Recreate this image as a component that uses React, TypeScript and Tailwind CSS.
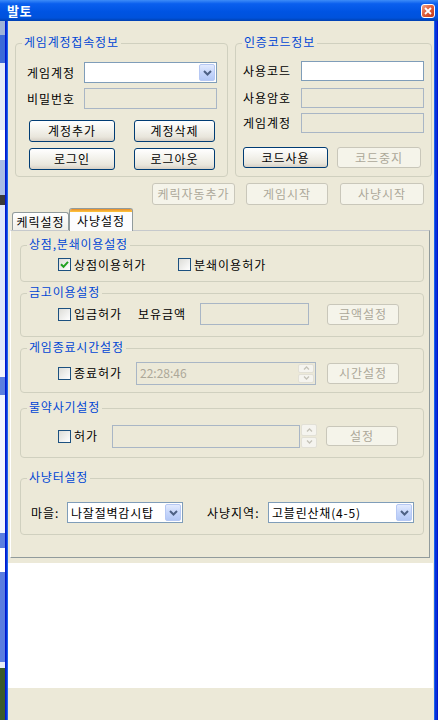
import React from "react";

type P = { children?: React.ReactNode; className?: string; disabled?: boolean };

function Btn({ children, disabled = false, className = "" }: P) {
  return (
    <div
      className={`flex shrink-0 items-center justify-center rounded-[3px] border text-[12px] leading-none tracking-[1px] ${
        disabled
          ? "border-[#c9c7ba] bg-[#f5f4ea] text-[#aca899]"
          : "border-[#003c74] bg-[linear-gradient(to_bottom,#ffffff_0%,#f3f2ec_45%,#e9e6dc_80%,#d6d0c5_100%)] text-black"
      } ${className}`}
    >
      {children}
    </div>
  );
}

function Group({ title, className = "", children }: P & { title: string }) {
  return (
    <div className={`relative shrink-0 rounded-[4px] border border-[#d0d0bf] ${className}`}>
      <div className="absolute left-[6px] top-[-10px] h-[16px] bg-[#ece9d8] px-[2px] text-[12px] leading-[16px] tracking-[0.8px] text-[#0046d5]">
        {title}
      </div>
      {children}
    </div>
  );
}

function Box({ disabled = false, className = "", children }: P) {
  return (
    <div
      className={`flex shrink-0 items-center border text-[12px] leading-none ${
        disabled ? "border-[#a9b6c5] bg-[#ece9d8]" : "border-[#7f9db9] bg-white"
      } ${className}`}
    >
      {children}
    </div>
  );
}

function DropBtn() {
  return (
    <div className="mr-[1px] flex h-[17px] w-[16px] shrink-0 items-center justify-center rounded-[2px] border border-[#b6c8f4] bg-[linear-gradient(to_bottom,#e3ebfe_0%,#c6d6fb_50%,#b3c8f6_100%)]">
      <svg width="9" height="6" viewBox="0 0 9 6">
        <path d="M1 1 L4.5 4.5 L8 1" fill="none" stroke="#4d6185" strokeWidth="2" />
      </svg>
    </div>
  );
}

function Combo({ value = "", className = "" }: { value?: string; className?: string }) {
  return (
    <Box className={`h-[21px] ${className}`}>
      <span className="flex-1 pl-[3px] tracking-[0.8px] text-black">{value}</span>
      <DropBtn />
    </Box>
  );
}

function Check({ checked = false }: { checked?: boolean }) {
  return (
    <div className="flex h-[13px] w-[13px] shrink-0 items-center justify-center border border-[#1c5180] bg-[linear-gradient(135deg,#dcdcd7,#ffffff)]">
      {checked && (
        <svg width="9" height="9" viewBox="0 0 9 9">
          <path d="M1 4.2 L3.5 6.8 L8 1.8" fill="none" stroke="#21a121" strokeWidth="2" />
        </svg>
      )}
    </div>
  );
}

function CheckItem({ label, checked = false, className = "" }: { label: string; checked?: boolean; className?: string }) {
  return (
    <div className={`flex shrink-0 items-center ${className}`}>
      <Check checked={checked} />
      <span className="ml-[3px] text-[12px] leading-none tracking-[1px] text-black">{label}</span>
    </div>
  );
}

function Spin({ className = "" }: { className?: string }) {
  return (
    <div className={`flex shrink-0 flex-col gap-[1px] ${className}`}>
      <div className="flex flex-1 items-center justify-center rounded-[2px] border border-[#e2e0d6] bg-[#f5f4ef]">
        <svg width="7" height="4" viewBox="0 0 7 4">
          <path d="M1 3.5 L3.5 1 L6 3.5" fill="none" stroke="#c4c2b8" strokeWidth="1.3" />
        </svg>
      </div>
      <div className="flex flex-1 items-center justify-center rounded-[2px] border border-[#e2e0d6] bg-[#f5f4ef]">
        <svg width="7" height="4" viewBox="0 0 7 4">
          <path d="M1 0.5 L3.5 3 L6 0.5" fill="none" stroke="#c4c2b8" strokeWidth="1.3" />
        </svg>
      </div>
    </div>
  );
}

function Label({ children, className = "" }: P) {
  return <span className={`shrink-0 text-[12px] leading-none tracking-[1px] text-black ${className}`}>{children}</span>;
}

export default function App() {
  return (
    <div className="flex h-[720px] w-[438px] flex-col overflow-hidden bg-[#ece9d8] font-['Noto_Sans_CJK_KR','Noto_Sans',sans-serif]">
      {/* title bar */}
      <div className="flex h-[21px] shrink-0 items-center justify-between bg-[linear-gradient(to_bottom,#3d8cf8_0%,#0a5fee_18%,#0054e3_55%,#0052dc_85%,#0040b0_100%)] pl-[7px] pr-[3px]">
        <span className="text-[13px] font-bold leading-none tracking-[0.5px] text-white">발토</span>
        <div className="flex h-[14px] w-[14px] items-center justify-center rounded-[3px] border border-white bg-[linear-gradient(135deg,#f0a48a_0%,#e0603c_45%,#c43a1a_100%)]">
          <svg width="8" height="8" viewBox="0 0 8 8">
            <path d="M1 1 L7 7 M7 1 L1 7" stroke="#ffffff" strokeWidth="1.8" />
          </svg>
        </div>
      </div>

      <div className="flex flex-1">
        {/* desktop strip */}
        <div className="flex w-[5px] shrink-0 flex-col">
          <div className="h-[14px] bg-[#9fb3d8]" />
          <div className="h-[28px] bg-[#3c6ad8]" />
          <div className="h-[67px] bg-[#e4ebf8]" />
          <div className="h-[30px] bg-[#ffffff]" />
          <div className="h-[35px] bg-[#a9bde6]" />
          <div className="h-[10px] bg-[#3a3a3a]" />
          <div className="h-[155px] bg-[#dfe7fb]" />
          <div className="h-[17px] bg-[#f4f6fc]" />
          <div className="h-[18px] bg-[#5b7fe0]" />
          <div className="h-[138px] bg-[#f0f4ff]" />
          <div className="h-[15px] bg-[#5b7fe0]" />
          <div className="h-[24px] bg-[#ffffff]" />
          <div className="h-[90px] bg-[#5a7ee0]" />
          <div className="h-[6px] bg-[#e8eef8]" />
          <div className="flex-1 bg-[#3b5a2a]" />
        </div>
        {/* window left border */}
        <div className="w-[1px] shrink-0 bg-[#0019cf]" />
        <div className="w-[1px] shrink-0 bg-[#0831d9]" />
        <div className="w-[1px] shrink-0 bg-[#1d63ea]" />

        {/* client area */}
        <div className="flex w-[426px] shrink-0 flex-col bg-[#ece9d8]">
          {/* top groups */}
          <div className="mt-[22px] flex gap-[7px] pl-[7px]">
            <Group title="게임계정접속정보" className="h-[134px] w-[213px]">
              <div className="mt-[18px] flex items-center pl-[11px]">
                <Label className="w-[57px]">게임계정</Label>
                <Combo className="w-[133px]" />
              </div>
              <div className="mt-[5px] flex items-center pl-[11px]">
                <Label className="w-[57px]">비밀번호</Label>
                <Box disabled className="h-[21px] w-[133px]" />
              </div>
              <div className="mt-[11px] flex gap-[19px] pl-[13px]">
                <Btn className="h-[22px] w-[86px]">계정추가</Btn>
                <Btn className="h-[22px] w-[81px]">계정삭제</Btn>
              </div>
              <div className="mt-[6px] flex gap-[19px] pl-[13px]">
                <Btn className="h-[22px] w-[86px]">로그인</Btn>
                <Btn className="h-[22px] w-[81px]">로그아웃</Btn>
              </div>
            </Group>

            <Group title="인증코드정보" className="h-[134px] w-[197px]">
              <div className="mt-[17px] flex items-center pl-[7px]">
                <Label className="w-[58px]">사용코드</Label>
                <Box className="h-[20px] w-[123px]" />
              </div>
              <div className="mt-[7px] flex items-center pl-[7px]">
                <Label className="w-[58px]">사용암호</Label>
                <Box disabled className="h-[20px] w-[123px]" />
              </div>
              <div className="mt-[5px] flex items-center pl-[7px]">
                <Label className="w-[58px]">게임계정</Label>
                <Box disabled className="h-[20px] w-[123px]" />
              </div>
              <div className="mt-[14px] flex gap-[9px] pl-[7px]">
                <Btn className="h-[21px] w-[85px]">코드사용</Btn>
                <Btn disabled className="h-[21px] w-[84px]">
                  코드중지
                </Btn>
              </div>
            </Group>
          </div>

          {/* action buttons */}
          <div className="mt-[6px] flex h-[22px] pl-[144px]">
            <Btn disabled className="h-[22px] w-[83px]">
              케릭자동추가
            </Btn>
            <Btn disabled className="ml-[11px] h-[22px] w-[82px]">
              게임시작
            </Btn>
            <Btn disabled className="ml-[12px] h-[22px] w-[84px]">
              사냥시작
            </Btn>
          </div>

          {/* tabs */}
          <div className="mt-[3px] flex h-[22px] items-end pl-[4px]">
            <div className="flex h-[18px] w-[57px] items-center justify-center rounded-t-[3px] border border-b-0 border-[#919b9c] bg-[linear-gradient(to_bottom,#ffffff,#f0efe8)] text-[12px] leading-none tracking-[1px] text-black">
              케릭설정
            </div>
            <div className="relative z-10 -mb-[1px] flex h-[23px] w-[64px] flex-col rounded-t-[3px] border border-b-0 border-[#919b9c] bg-[#fcfcfe]">
              <div className="h-[3px] rounded-t-[2px] bg-[linear-gradient(to_bottom,#e68b2c,#ffc73c)]" />
              <div className="flex flex-1 items-center justify-center pb-[2px] text-[12px] leading-none tracking-[1px] text-black">
                사냥설정
              </div>
            </div>
          </div>
          <div className="ml-[2px] flex h-[328px] w-[420px] flex-col border border-[#919b9c] border-l-white border-t-[#c6c9cc] bg-[#ece9d8]">
            <Group title="상점,분쇄이용설정" className="ml-[9px] mt-[14px] h-[37px] w-[404px]">
              <div className="flex pl-[37px] pt-[12px]">
                <CheckItem checked label="상점이용허가" className="w-[120px]" />
                <CheckItem label="분쇄이용허가" />
              </div>
            </Group>

            <Group title="금고이용설정" className="ml-[9px] mt-[11px] h-[44px] w-[404px]">
              <div className="mt-[9px] flex h-[22px] items-center pl-[37px]">
                <CheckItem label="입금허가" className="w-[80px]" />
                <Label className="w-[62px]">보유금액</Label>
                <Box disabled className="h-[22px] w-[109px]" />
                <Btn disabled className="ml-[18px] h-[21px] w-[72px]">
                  금액설정
                </Btn>
              </div>
            </Group>

            <Group title="게임종료시간설정" className="ml-[9px] mt-[11px] h-[45px] w-[404px]">
              <div className="mt-[13px] flex h-[22px] items-center pl-[37px]">
                <CheckItem label="종료허가" className="w-[78px]" />
                <Box disabled className="h-[23px] w-[180px]">
                  <span className="flex-1 pl-[3px] text-[#aca899]">22:28:46</span>
                  <Spin className="mr-[1px] h-[19px] w-[16px]" />
                </Box>
                <Btn disabled className="ml-[11px] h-[21px] w-[72px]">
                  시간설정
                </Btn>
              </div>
            </Group>

            <Group title="물약사기설정" className="ml-[9px] mt-[15px] h-[50px] w-[404px]">
              <div className="mt-[15px] flex h-[24px] items-center pl-[37px]">
                <CheckItem label="허가" className="w-[54px]" />
                <Box disabled className="h-[23px] w-[188px]" />
                <Spin className="ml-[1px] h-[24px] w-[16px]" />
                <Btn disabled className="ml-[9px] h-[20px] w-[72px]">
                  설정
                </Btn>
              </div>
            </Group>

            <Group title="사냥터설정" className="ml-[9px] mt-[20px] h-[57px] w-[404px]">
              <div className="mt-[23px] flex h-[21px] items-center pl-[10px]">
                <Label className="w-[36px]">마을:</Label>
                <Combo value="나잘절벽감시탑" className="w-[116px]" />
                <Label className="ml-[24px] w-[61px]">사냥지역:</Label>
                <Combo value="고블린산채(4-5)" className="w-[146px]" />
              </div>
            </Group>
          </div>

          <div className="mt-[5px] h-[125px] w-[425px] bg-white" />
          <div className="flex-1" />
        </div>

        {/* window right border */}
        <div className="w-[1px] shrink-0 bg-[#1d63ea]" />
        <div className="w-[2px] shrink-0 bg-[#0831d9]" />
        <div className="w-[1px] shrink-0 bg-[#0019cf]" />
      </div>
    </div>
  );
}
